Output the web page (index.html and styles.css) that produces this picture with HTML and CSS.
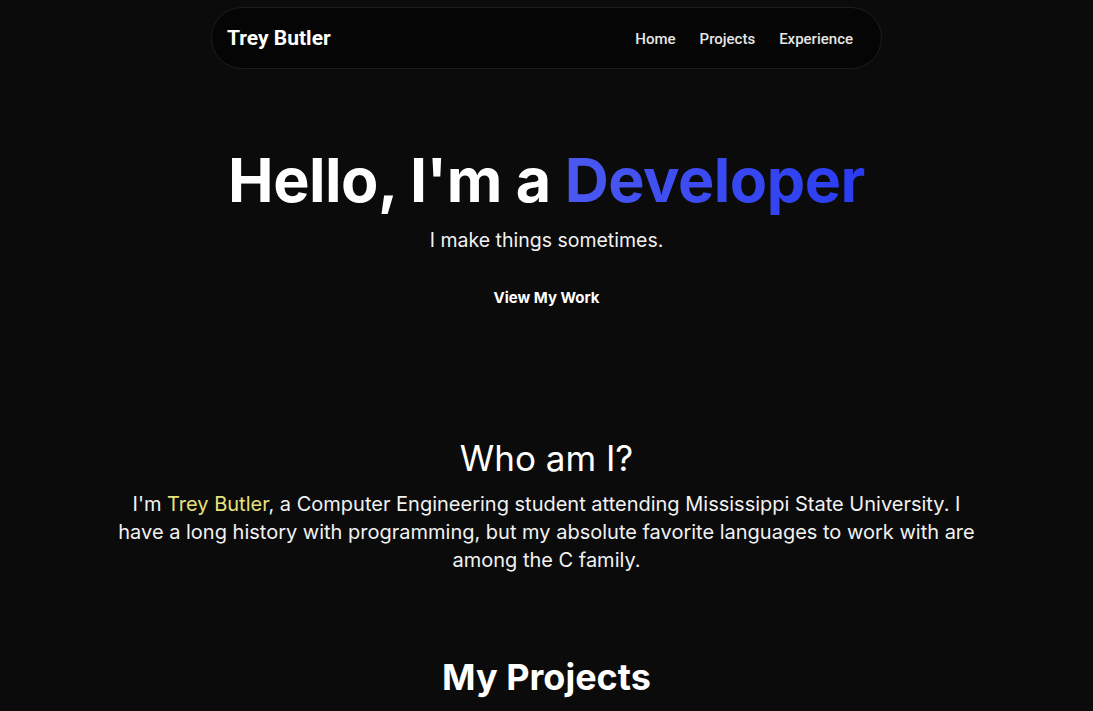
FILE: index.html
```html
<!DOCTYPE html>
<html lang="en">
<head>
<meta charset="utf-8">
<title>Trey Butler</title>
<link rel="stylesheet" href="styles.css">
</head>
<body>
<header class="nav-wrap">
  <nav class="nav">
    <a class="brand" href="#">Trey Butler</a>
    <ul class="links">
      <li><a href="#">Home</a></li>
      <li><a href="#">Projects</a></li>
      <li><a href="#">Experience</a></li>
    </ul>
  </nav>
</header>
<main>
  <section class="hero">
    <h1 class="hero-title">Hello, I'm a <span class="accent">Developer</span></h1>
    <p class="hero-sub">I make things sometimes.</p>
    <a class="cta" href="#">View My Work</a>
  </section>
  <section class="about">
    <h2 class="about-title">Who am I?</h2>
    <p class="about-text">I'm <span class="name">Trey Butler</span>, a Computer Engineering student attending Mississippi State University. I have a long history with programming, but my absolute favorite languages to work with are among the C family.</p>
  </section>
  <section class="projects">
    <h2 class="projects-title">My Projects</h2>
  </section>
</main>
</body>
</html>
```

FILE: styles.css
```css
* { box-sizing: border-box; }
html, body { margin: 0; padding: 0; }
body {
  background: #0b0b0b;
  color: #ffffff;
  font-family: Inter, "Noto Sans", sans-serif;
  overflow: hidden;
}
a { color: inherit; text-decoration: none; }

.nav-wrap {
  display: flex;
  justify-content: center;
  padding-top: 7px;
}
.nav {
  width: 671px;
  height: 62px;
  display: flex;
  align-items: center;
  justify-content: space-between;
  padding: 0 28px 0 15px;
  background: #050505;
  border: 1px solid #1d1d1d;
  border-radius: 31px;
}
.brand {
  font-family: Roboto, "Liberation Sans", sans-serif;
  font-weight: 700;
  font-size: 21px;
}
.links {
  display: flex;
  gap: 24px;
  list-style: none;
  margin: 0;
  padding: 0;
}
.links a {
  font-family: Roboto, "Liberation Sans", sans-serif;
  font-size: 15px;
  font-weight: 500;
  color: #e6e6e6;
}

.hero {
  display: flex;
  flex-direction: column;
  align-items: center;
  padding-top: 73px;
}
.hero-title {
  margin: 0;
  font-size: 61px;
  font-weight: 700;
  line-height: 76px;
  letter-spacing: -0.5px;
}
.accent {
  background: linear-gradient(90deg, #4b58f0, #2a3cf2);
  -webkit-background-clip: text;
  background-clip: text;
  color: transparent;
}
.hero-sub {
  margin: 8px 0 0;
  font-size: 19.5px;
  line-height: 28px;
  color: #f2f2f2;
}
.cta {
  margin-top: 34px;
  font-size: 15px;
  font-weight: 700;
  line-height: 20px;
}

.about {
  display: flex;
  flex-direction: column;
  align-items: center;
  padding-top: 128px;
}
.about-title {
  margin: 0;
  font-size: 35px;
  font-weight: 400;
  line-height: 44px;
}
.about-text {
  margin: 10px 0 0;
  max-width: 870px;
  text-align: center;
  font-size: 20px;
  line-height: 28px;
  color: #f2f2f2;
}
.name { color: #e8e27a; }

.projects {
  display: flex;
  justify-content: center;
  padding-top: 81px;
}
.projects-title {
  margin: 0;
  font-size: 36px;
  font-weight: 700;
  line-height: 44px;
}
```
